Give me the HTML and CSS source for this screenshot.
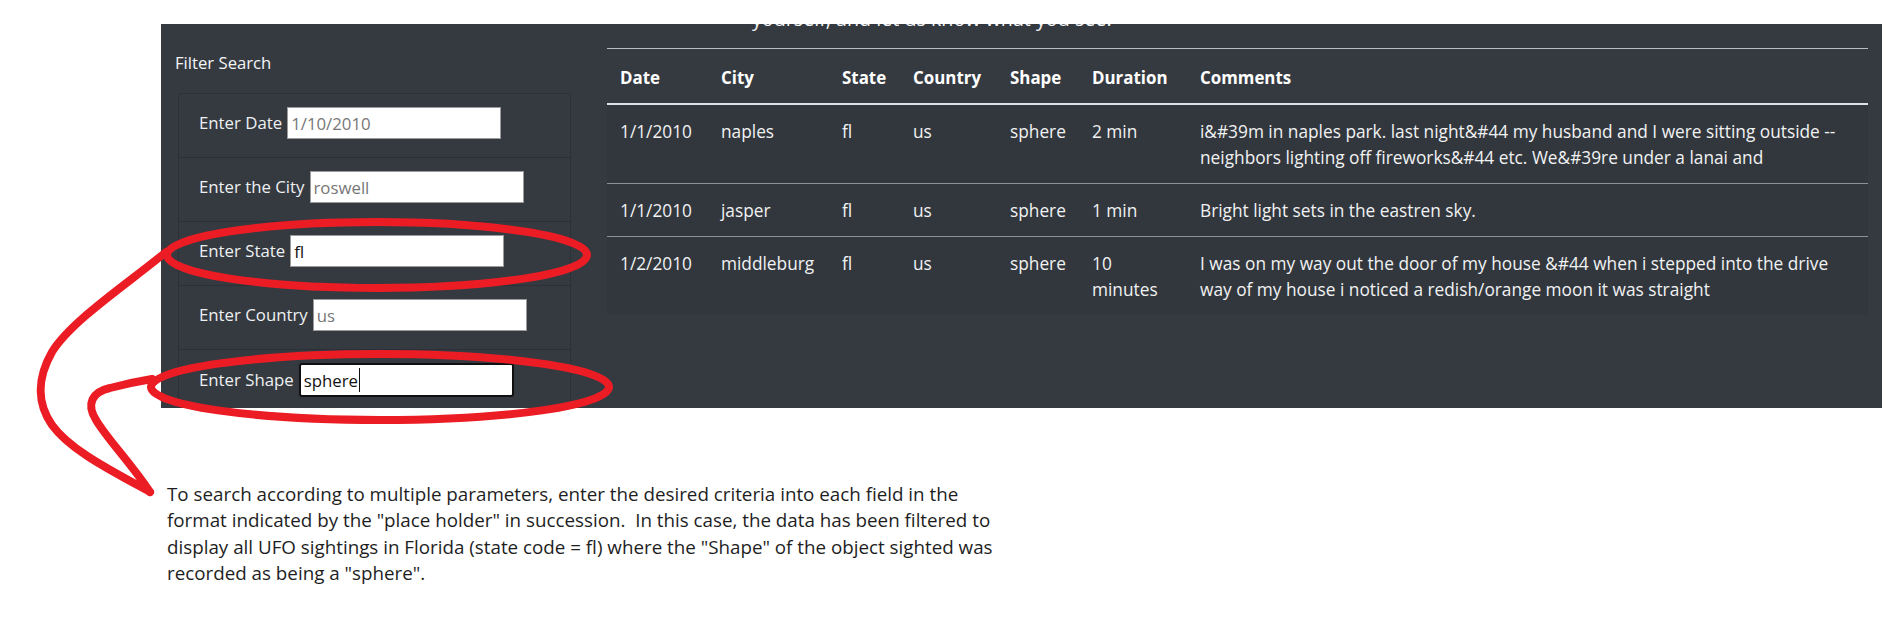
FILE: index.html
```html
<!DOCTYPE html>
<html lang="en">
<head>
<meta charset="utf-8">
<title>UFO Sightings</title>
<link rel="stylesheet" href="styles.css">
</head>
<body>
<div class="page">
  <section class="panel">
    <aside class="filters">
      <h5 class="filters-title">Filter Search</h5>
      <ul class="list-group">
        <li class="list-item"><label class="field-label" for="date">Enter Date</label><input class="field" id="date" type="text" placeholder="1/10/2010"></li>
        <li class="list-item"><label class="field-label" for="city">Enter the City</label><input class="field" id="city" type="text" placeholder="roswell"></li>
        <li class="list-item"><label class="field-label" for="state">Enter State</label><input class="field" id="state" type="text" value="fl"></li>
        <li class="list-item"><label class="field-label" for="country">Enter Country</label><input class="field" id="country" type="text" placeholder="us"></li>
        <li class="list-item"><label class="field-label" for="shape">Enter Shape</label><span class="field-wrap"><input class="field field-focus" id="shape" type="text" value="sphere"><span class="caret"></span></span></li>
      </ul>
    </aside>
    <div class="results">
      <div class="intro"><p class="intro-text">yourself, and let us know what you see.</p></div>
      <table class="table">
        <colgroup>
          <col class="c-date"><col class="c-city"><col class="c-state"><col class="c-country"><col class="c-shape"><col class="c-duration"><col class="c-comments">
        </colgroup>
        <thead>
          <tr><th>Date</th><th>City</th><th>State</th><th>Country</th><th>Shape</th><th class="dur">Duration</th><th>Comments</th></tr>
        </thead>
        <tbody>
          <tr><td>1/1/2010</td><td>naples</td><td>fl</td><td>us</td><td>sphere</td><td class="dur">2 min</td><td class="comment">i&amp;#39m in naples park. last night&amp;#44 my husband and I were sitting outside --<br>neighbors lighting off fireworks&amp;#44 etc. We&amp;#39re under a lanai and</td></tr>
          <tr><td>1/1/2010</td><td>jasper</td><td>fl</td><td>us</td><td>sphere</td><td class="dur">1 min</td><td class="comment">Bright light sets in the eastren sky.</td></tr>
          <tr><td>1/2/2010</td><td>middleburg</td><td>fl</td><td>us</td><td>sphere</td><td class="dur">10 minutes</td><td class="comment">I was on my way out the door of my house &amp;#44 when i stepped into the drive<br>way of my house i noticed a redish/orange moon it was straight</td></tr>
        </tbody>
      </table>
    </div>
  </section>
  <p class="note">To search according to multiple parameters, enter the desired criteria into each field in the<br>format indicated by the "place holder" in succession.&nbsp; In this case, the data has been filtered to<br>display all UFO sightings in Florida (state code = fl) where the "Shape" of the object sighted was<br>recorded as being a "sphere".</p>
</div>
<svg class="marks" width="1892" height="629" viewBox="0 0 1892 629" aria-hidden="true">
  <g fill="none" stroke="#ec1c24" stroke-width="8" stroke-linecap="round" stroke-linejoin="round">
    <ellipse cx="377" cy="255" rx="210" ry="33"/>
    <ellipse cx="380" cy="387" rx="229" ry="33"/>
    <path d="M166,252 C130,282 72,320 52,352 C36,380 38,405 52,425 C70,450 110,470 150,492"/>
    <path d="M150,492 C130,462 108,440 96,420 C86,404 92,392 110,388 C125,384 140,381 152,379"/>
  </g>
</svg>
</body>
</html>
```

FILE: styles.css
```css
* { box-sizing: border-box; }

html, body {
  margin: 0;
  padding: 0;
  background: #ffffff;
}

body {
  font-family: "Open Sans", "Noto Sans", "DejaVu Sans", sans-serif;
  font-size: 17px;
  position: relative;
  width: 1892px;
  height: 629px;
  overflow: hidden;
}

.page {
  padding: 24px 0 0 161px;
}

.panel {
  width: 1721px;
  height: 384px;
  overflow: hidden;
  background: #353a41;
  color: #ffffff;
  display: flex;
  padding: 0 14px;
}

.filters {
  width: 432px;
  flex: none;
  padding-top: 27px;
}

.filters-title {
  margin: 0;
  font-size: 16.7px;
  font-weight: 400;
  line-height: 24px;
  color: #f4f5f6;
}

.list-group {
  list-style: none;
  margin: 18px 0 0 3px;
  padding: 0;
  width: 393px;
  border: 1px solid rgba(0, 0, 0, 0.14);
  border-radius: 4px;
}

.list-item {
  display: flex;
  align-items: center;
  padding: 13px 20px 18px;
}

.list-item + .list-item {
  border-top: 1px solid rgba(0, 0, 0, 0.16);
}

.field-label {
  color: #eef0f2;
  font-size: 16.8px;
  line-height: 24px;
}

.field {
  margin-left: 5px;
  width: 214px;
  height: 32px;
  border: 1px solid #9a9a9a;
  background: #ffffff;
  padding: 0 3px;
  font-family: "Open Sans", "Noto Sans", sans-serif;
  font-size: 16.8px;
  color: #111111;
  outline: none;
}

.field::placeholder {
  color: #777777;
}

.field-wrap {
  position: relative;
  display: block;
  margin-left: 5px;
}

.field-wrap .field {
  margin-left: 0;
}

.field-focus {
  width: 215px;
  height: 34px;
  border: 2px solid #111111;
  border-radius: 3px;
  padding: 0 3px;
}

.caret {
  position: absolute;
  left: 60px;
  top: 5px;
  width: 1px;
  height: 24px;
  background: #111111;
}

.results {
  flex: 1;
  min-width: 0;
}

.intro {
  height: 24px;
  overflow: hidden;
}

.intro-text {
  margin: -20px 0 0 0;
  padding-left: 145px;
  font-size: 19.7px;
  line-height: 30px;
  color: #f4f5f6;
  white-space: nowrap;
}

.table {
  width: 100%;
  border-collapse: collapse;
  table-layout: fixed;
  color: #f1f2f3;
}

.c-date { width: 101px; }
.c-city { width: 121px; }
.c-state { width: 71px; }
.c-country { width: 97px; }
.c-shape { width: 82px; }
.c-duration { width: 108px; }

.table th,
.table td {
  text-align: left;
  vertical-align: top;
  line-height: 26px;
  padding: 14px 12px 12px 13px;
  font-size: 17.3px;
  white-space: nowrap;
}

.table th {
  font-weight: 700;
  font-size: 16.9px;
  color: #ffffff;
  padding-top: 16px;
  border-top: 1px solid #b9bdc1;
  border-bottom: 2px solid #dee2e6;
}

.table tbody {
  background: #32373d;
}

.table tbody tr + tr td {
  border-top: 1px solid #8d9196;
}

.table td.dur {
  padding-right: 36px;
  white-space: normal;
}

.note {
  margin: 73px 0 0 6px;
  font-size: 18.8px;
  line-height: 26.3px;
  color: #1e1e1e;
  white-space: nowrap;
}

.marks {
  position: absolute;
  left: 0;
  top: 0;
  pointer-events: none;
}
```
